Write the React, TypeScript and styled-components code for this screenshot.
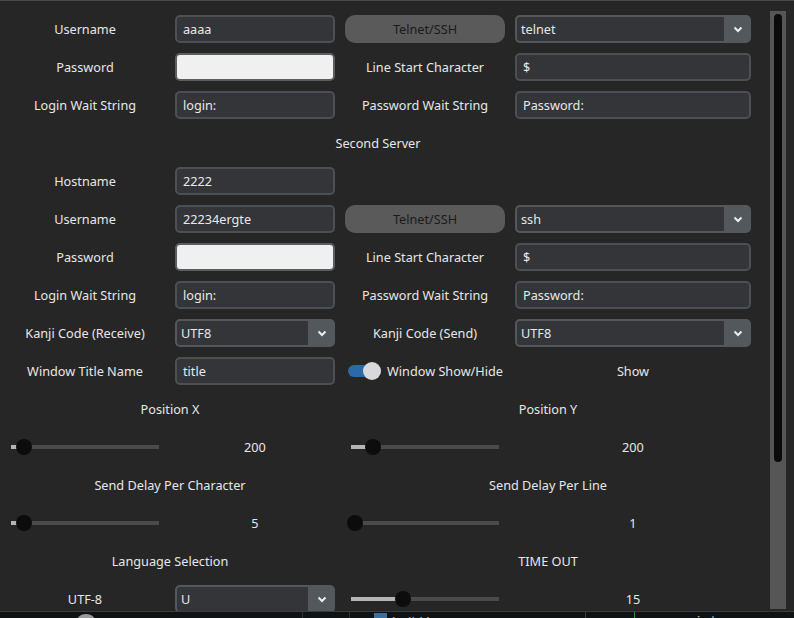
import styled, { createGlobalStyle } from "styled-components";

const GlobalStyle = createGlobalStyle`
  html, body {
    margin: 0;
    padding: 0;
    background: #0e1416;
    overflow: hidden;
  }
  * {
    box-sizing: border-box;
  }
`;

const Screen = styled.div`
  width: 794px;
  height: 618px;
  display: flex;
  flex-direction: column;
  overflow: hidden;
`;

const Window = styled.div`
  height: 612px;
  display: flex;
  background: #262626;
  border-top: 1px solid #4a4a4a;
  border-bottom: 1px solid #3c3c3c;
  overflow: hidden;
  font-family: "Noto Sans", "Open Sans", sans-serif;
  font-size: 12.7px;
  color: #e6e6e6;
`;

const Form = styled.div`
  flex: 1;
  display: grid;
  grid-template-columns: 160px 160px 160px 236px;
  grid-auto-rows: 38px;
  column-gap: 10px;
  align-items: center;
  padding: 9px 0 0 5px;
`;

const Label = styled.div<{ $span?: number }>`
  text-align: center;
  white-space: nowrap;
  grid-column: span ${(p) => p.$span ?? 1};
`;

const TextInput = styled.div<{ $light?: boolean }>`
  height: 28px;
  display: flex;
  align-items: center;
  padding: 0 6px;
  border: 2px solid ${(p) => (p.$light ? "#5a5e62" : "#4c5054")};
  border-radius: 5px;
  background: ${(p) => (p.$light ? "#f0f0f0" : "#333538")};
  color: #e8e8e8;
`;

const ModeButton = styled.div`
  height: 28px;
  display: flex;
  align-items: center;
  justify-content: center;
  border-radius: 10px;
  background: #5a5a5a;
  color: #1a1a1a;
`;

const SelectBox = styled.div`
  height: 28px;
  display: flex;
  padding: 2px 0 2px 2px;
  border-radius: 5px;
  background: #53585c;
`;

const SelectValue = styled.div`
  flex: 1;
  display: flex;
  align-items: center;
  padding: 0 4px;
  border-radius: 3px 0 0 3px;
  background: #333538;
`;

const SelectArrow = styled.div`
  width: 27px;
  display: flex;
  align-items: center;
  justify-content: center;
`;

const ToggleCell = styled.div`
  display: flex;
  align-items: center;
  gap: 6px;
  padding-left: 3px;
  white-space: nowrap;
`;

const ToggleTrack = styled.div`
  position: relative;
  width: 33px;
  height: 12px;
  border-radius: 6px;
  background: #2b6aa6;
`;

const ToggleKnob = styled.div`
  position: absolute;
  right: 0;
  top: -3px;
  width: 18px;
  height: 18px;
  border-radius: 50%;
  background: #d9d9dd;
`;

const SliderCell = styled.div`
  display: flex;
  justify-content: center;
`;

const SliderTrack = styled.div`
  position: relative;
  width: 148px;
  height: 4px;
  background: #4a4a4a;
`;

const SliderFill = styled.div`
  position: absolute;
  left: 0;
  top: 0;
  height: 4px;
  background: #b5b5b5;
`;

const SliderThumb = styled.div`
  position: absolute;
  top: -6px;
  width: 16px;
  height: 16px;
  margin-left: -8px;
  border-radius: 50%;
  background: #0c0c0c;
`;

const ScrollTrack = styled.div`
  width: 16px;
  margin: 10px 8px 2px 0;
  padding: 3px 4px 0;
  background: #565656;
`;

const ScrollHandle = styled.div`
  height: 448px;
  border-radius: 4px;
  background: #0b0b0b;
`;

const Behind = styled.div`
  flex: 1;
  display: flex;
  align-items: flex-start;
  overflow: hidden;
  background: #0e1416;
  font-family: "Noto Sans", sans-serif;
  font-size: 13px;
  line-height: 18px;
  color: #c8c8c8;
  white-space: nowrap;
`;

const BehindPane = styled.div<{ $w?: number; $line?: string }>`
  width: ${(p) => (p.$w ? `${p.$w}px` : "auto")};
  flex: ${(p) => (p.$w ? "none" : "1")};
  height: 6px;
  border-right: 1px solid ${(p) => p.$line ?? "#2e3436"};
  display: flex;
  align-items: flex-start;
`;

const Orb = styled.div`
  width: 22px;
  height: 22px;
  margin: 2px 0 0 75px;
  border-radius: 50%;
  background: #9a9a9a;
`;

const FileIcon = styled.div`
  width: 13px;
  height: 12px;
  margin: 1px 5px 0 24px;
  background: #3d6f9c;
`;

const Clipped = styled.span<{ $mono?: boolean; $indent: number }>`
  margin: 1px 0 0 ${(p) => p.$indent}px;
  font-family: ${(p) => (p.$mono ? '"Liberation Mono", monospace' : "inherit")};
`;

function Chevron() {
  return (
    <svg width="10" height="7" viewBox="0 0 10 7">
      <polyline
        points="1.5,1.5 5,5 8.5,1.5"
        fill="none"
        stroke="#eeeeee"
        strokeWidth="2"
      />
    </svg>
  );
}

function Select({ value }: { value: string }) {
  return (
    <SelectBox>
      <SelectValue>{value}</SelectValue>
      <SelectArrow>
        <Chevron />
      </SelectArrow>
    </SelectBox>
  );
}

function Slider({ pos }: { pos: number }) {
  const x = 4 + pos * 140;
  return (
    <SliderCell>
      <SliderTrack>
        <SliderFill style={{ width: x }} />
        <SliderThumb style={{ left: x }} />
      </SliderTrack>
    </SliderCell>
  );
}

function App() {
  return (
    <Screen>
      <GlobalStyle />
      <Window>
        <Form>
          <Label>Username</Label>
          <TextInput>aaaa</TextInput>
          <ModeButton>Telnet/SSH</ModeButton>
          <Select value="telnet" />

          <Label>Password</Label>
          <TextInput $light />
          <Label>Line Start Character</Label>
          <TextInput>$</TextInput>

          <Label>Login Wait String</Label>
          <TextInput>login:</TextInput>
          <Label>Password Wait String</Label>
          <TextInput>Password:</TextInput>

          <Label $span={4}>Second Server</Label>

          <Label>Hostname</Label>
          <TextInput>2222</TextInput>
          <Label $span={2} />

          <Label>Username</Label>
          <TextInput>22234ergte</TextInput>
          <ModeButton>Telnet/SSH</ModeButton>
          <Select value="ssh" />

          <Label>Password</Label>
          <TextInput $light />
          <Label>Line Start Character</Label>
          <TextInput>$</TextInput>

          <Label>Login Wait String</Label>
          <TextInput>login:</TextInput>
          <Label>Password Wait String</Label>
          <TextInput>Password:</TextInput>

          <Label>Kanji Code (Receive)</Label>
          <Select value="UTF8" />
          <Label>Kanji Code (Send)</Label>
          <Select value="UTF8" />

          <Label>Window Title Name</Label>
          <TextInput>title</TextInput>
          <ToggleCell>
            <ToggleTrack>
              <ToggleKnob />
            </ToggleTrack>
            Window Show/Hide
          </ToggleCell>
          <Label>Show</Label>

          <Label $span={2}>Position X</Label>
          <Label $span={2}>Position Y</Label>
          <Slider pos={0.064} />
          <Label>200</Label>
          <Slider pos={0.126} />
          <Label>200</Label>

          <Label $span={2}>Send Delay Per Character</Label>
          <Label $span={2}>Send Delay Per Line</Label>
          <Slider pos={0.064} />
          <Label>5</Label>
          <Slider pos={0} />
          <Label>1</Label>

          <Label $span={2}>Language Selection</Label>
          <Label $span={2}>TIME OUT</Label>
          <Label>UTF-8</Label>
          <Select value="U" />
          <Slider pos={0.34} />
          <Label>15</Label>
        </Form>
        <ScrollTrack>
          <ScrollHandle />
        </ScrollTrack>
      </Window>
      <Behind>
        <BehindPane $w={303}>
          <Orb />
        </BehindPane>
        <BehindPane $w={47} />
        <BehindPane $w={236} $line="#3a4042">
          <FileIcon />
          <Clipped $indent={0}>build.bat</Clipped>
        </BehindPane>
        <BehindPane $w={49} $line="#2f8f3a">
          <Clipped $indent={27}>24</Clipped>
        </BehindPane>
        <BehindPane $line="transparent">
          <Clipped $mono $indent={36}>
            register_servers
          </Clipped>
        </BehindPane>
      </Behind>
    </Screen>
  );
}

export default App;
